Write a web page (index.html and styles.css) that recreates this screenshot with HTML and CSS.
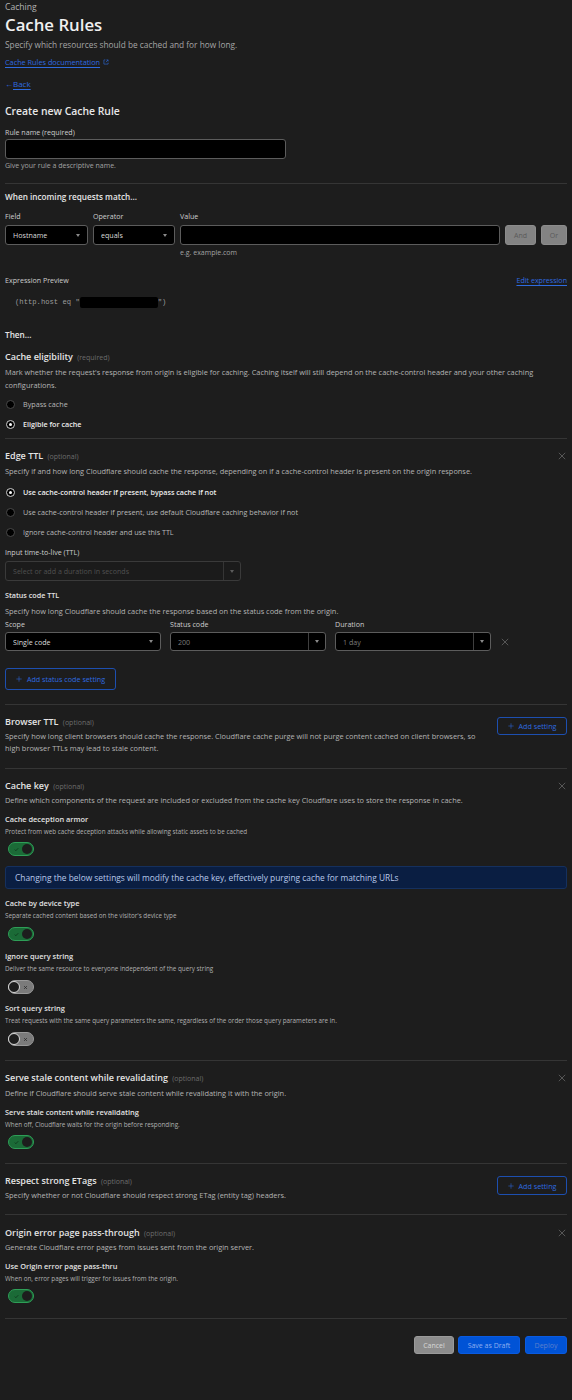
FILE: index.html
```html
<!DOCTYPE html>
<html lang="en">
<head>
<meta charset="utf-8">
<title>Cache Rules</title>
<link rel="stylesheet" href="styles.css">
</head>
<body>
<main class="page">
  <header class="page-header">
    <div class="crumb">Caching</div>
    <h1 class="title">Cache Rules</h1>
    <p class="subtitle">Specify which resources should be cached and for how long.</p>
    <div class="doc-row">
      <a class="link" href="#">Cache Rules documentation</a>
      <svg class="ext-icon" viewBox="0 0 8 8" width="6" height="6"><path d="M3.2 1.2H1.2v5.6h5.6V4.8" fill="none" stroke="currentColor" stroke-width="0.8"/><path d="M4.6 1.2h2.2v2.2M6.8 1.2L3.8 4.2" fill="none" stroke="currentColor" stroke-width="0.8"/></svg>
    </div>
    <div class="back-row"><span class="back-arrow">&larr;</span><a class="link" href="#">Back</a></div>
  </header>

  <section class="form-intro">
    <h2 class="form-title">Create new Cache Rule</h2>
    <label class="field-label rule-label">Rule name (required)</label>
    <div class="text-input rule-input"></div>
    <p class="hint">Give your rule a descriptive name.</p>
  </section>

  <section class="match">
    <h3 class="section-heading">When incoming requests match...</h3>
    <div class="match-grid">
      <span class="field-label">Field</span>
      <span class="field-label">Operator</span>
      <span class="field-label">Value</span>
      <span></span><span></span>
      <div class="select"><span class="select-value">Hostname</span><span class="caret"></span></div>
      <div class="select"><span class="select-value">equals</span><span class="caret"></span></div>
      <div class="text-input"></div>
      <button class="btn-gray" type="button">And</button>
      <button class="btn-gray" type="button">Or</button>
      <span></span><span></span>
      <span class="hint example">e.g. example.com</span>
    </div>
    <div class="expr-head"><span class="field-label">Expression Preview</span><a class="link" href="#">Edit expression</a></div>
    <div class="expr-code">(http.host eq "<span class="redacted"></span>")</div>
    <h3 class="section-heading then">Then...</h3>
  </section>

  <section class="setting eligibility">
    <h4 class="setting-title">Cache eligibility <span class="tag">(required)</span></h4>
    <p class="setting-desc multi">Mark whether the request's response from origin is eligible for caching. Caching itself will still depend on the cache-control header and your other caching configurations.</p>
    <div class="radio-list">
      <div class="radio"><span class="radio-dot"></span>Bypass cache</div>
      <div class="radio checked"><span class="radio-dot"></span>Eligible for cache</div>
    </div>
  </section>

  <section class="setting edge-ttl">
    <div class="setting-head">
      <h4 class="setting-title">Edge TTL <span class="tag">(optional)</span></h4>
      <svg class="close-icon" viewBox="0 0 10 10" width="8" height="8"><path d="M1 1L9 9M9 1L1 9" stroke="currentColor" stroke-width="0.9"/></svg>
    </div>
    <p class="setting-desc">Specify if and how long Cloudflare should cache the response, depending on if a cache-control header is present on the origin response.</p>
    <div class="radio-list edge-radios">
      <div class="radio checked"><span class="radio-dot"></span>Use cache-control header if present, bypass cache if not</div>
      <div class="radio"><span class="radio-dot"></span>Use cache-control header if present, use default Cloudflare caching behavior if not</div>
      <div class="radio"><span class="radio-dot"></span>Ignore cache-control header and use this TTL</div>
    </div>
    <div class="field-label ttl-label">Input time-to-live (TTL)</div>
    <div class="select split disabled ttl-select"><span class="select-value">Select or add a duration in seconds</span><span class="select-sep"></span><span class="caret"></span></div>
    <h5 class="sub-title status-title">Status code TTL</h5>
    <p class="setting-desc status-desc">Specify how long Cloudflare should cache the response based on the status code from the origin.</p>
    <div class="status-grid">
      <span class="field-label">Scope</span>
      <span class="field-label">Status code</span>
      <span class="field-label">Duration</span>
      <span></span>
      <div class="select"><span class="select-value">Single code</span><span class="caret"></span></div>
      <div class="select split"><span class="select-value dim">200</span><span class="select-sep"></span><span class="caret"></span></div>
      <div class="select split"><span class="select-value dim">1 day</span><span class="select-sep"></span><span class="caret"></span></div>
      <svg class="close-icon row-close" viewBox="0 0 10 10" width="8" height="8"><path d="M1 1L9 9M9 1L1 9" stroke="currentColor" stroke-width="0.9"/></svg>
    </div>
    <button class="btn-outline add-status" type="button"><svg class="plus" viewBox="0 0 10 10" width="6" height="6"><path d="M5 0.5v9M0.5 5h9" stroke="currentColor" stroke-width="0.9"/></svg>Add status code setting</button>
  </section>

  <section class="setting browser-ttl">
    <div class="setting-row">
      <div class="setting-main">
        <h4 class="setting-title">Browser TTL <span class="tag">(optional)</span></h4>
        <p class="setting-desc">Specify how long client browsers should cache the response. Cloudflare cache purge will not purge content cached on client browsers, so high browser TTLs may lead to stale content.</p>
      </div>
      <button class="btn-outline add-setting" type="button"><svg class="plus" viewBox="0 0 10 10" width="6" height="6"><path d="M5 0.5v9M0.5 5h9" stroke="currentColor" stroke-width="0.9"/></svg>Add setting</button>
    </div>
  </section>

  <section class="setting cache-key">
    <div class="setting-head">
      <h4 class="setting-title">Cache key <span class="tag">(optional)</span></h4>
      <svg class="close-icon" viewBox="0 0 10 10" width="8" height="8"><path d="M1 1L9 9M9 1L1 9" stroke="currentColor" stroke-width="0.9"/></svg>
    </div>
    <p class="setting-desc">Define which components of the request are included or excluded from the cache key Cloudflare uses to store the response in cache.</p>

    <div class="toggle-item first">
      <h5 class="sub-title">Cache deception armor</h5>
      <p class="small-desc">Protect from web cache deception attacks while allowing static assets to be cached</p>
      <div class="toggle on"><svg class="tick" viewBox="0 0 10 10" width="5" height="5"><path d="M1.5 5.2l2.2 2.2 4.8-5" fill="none" stroke="currentColor" stroke-width="1.3"/></svg><span class="knob"></span></div>
    </div>

    <div class="banner">Changing the below settings will modify the cache key, effectively purging cache for matching URLs</div>

    <div class="toggle-item after-banner">
      <h5 class="sub-title">Cache by device type</h5>
      <p class="small-desc">Separate cached content based on the visitor's device type</p>
      <div class="toggle on"><svg class="tick" viewBox="0 0 10 10" width="5" height="5"><path d="M1.5 5.2l2.2 2.2 4.8-5" fill="none" stroke="currentColor" stroke-width="1.3"/></svg><span class="knob"></span></div>
    </div>

    <div class="toggle-item">
      <h5 class="sub-title">Ignore query string</h5>
      <p class="small-desc">Deliver the same resource to everyone independent of the query string</p>
      <div class="toggle off"><span class="knob"></span><svg class="cross" viewBox="0 0 10 10" width="5" height="5"><path d="M2 2l6 6M8 2L2 8" stroke="currentColor" stroke-width="1.3"/></svg></div>
    </div>

    <div class="toggle-item last">
      <h5 class="sub-title">Sort query string</h5>
      <p class="small-desc">Treat requests with the same query parameters the same, regardless of the order those query parameters are in.</p>
      <div class="toggle off"><span class="knob"></span><svg class="cross" viewBox="0 0 10 10" width="5" height="5"><path d="M2 2l6 6M8 2L2 8" stroke="currentColor" stroke-width="1.3"/></svg></div>
    </div>
  </section>

  <section class="setting serve-stale">
    <div class="setting-head">
      <h4 class="setting-title">Serve stale content while revalidating <span class="tag">(optional)</span></h4>
      <svg class="close-icon" viewBox="0 0 10 10" width="8" height="8"><path d="M1 1L9 9M9 1L1 9" stroke="currentColor" stroke-width="0.9"/></svg>
    </div>
    <p class="setting-desc">Define if Cloudflare should serve stale content while revalidating it with the origin.</p>
    <div class="toggle-item first">
      <h5 class="sub-title">Serve stale content while revalidating</h5>
      <p class="small-desc">When off, Cloudflare waits for the origin before responding.</p>
      <div class="toggle on"><svg class="tick" viewBox="0 0 10 10" width="5" height="5"><path d="M1.5 5.2l2.2 2.2 4.8-5" fill="none" stroke="currentColor" stroke-width="1.3"/></svg><span class="knob"></span></div>
    </div>
  </section>

  <section class="setting etags">
    <div class="setting-row">
      <div class="setting-main">
        <h4 class="setting-title">Respect strong ETags <span class="tag">(optional)</span></h4>
        <p class="setting-desc">Specify whether or not Cloudflare should respect strong ETag (entity tag) headers.</p>
      </div>
      <button class="btn-outline add-setting" type="button"><svg class="plus" viewBox="0 0 10 10" width="6" height="6"><path d="M5 0.5v9M0.5 5h9" stroke="currentColor" stroke-width="0.9"/></svg>Add setting</button>
    </div>
  </section>

  <section class="setting origin-error">
    <div class="setting-head">
      <h4 class="setting-title">Origin error page pass-through <span class="tag">(optional)</span></h4>
      <svg class="close-icon" viewBox="0 0 10 10" width="8" height="8"><path d="M1 1L9 9M9 1L1 9" stroke="currentColor" stroke-width="0.9"/></svg>
    </div>
    <p class="setting-desc">Generate Cloudflare error pages from issues sent from the origin server.</p>
    <div class="toggle-item first">
      <h5 class="sub-title">Use Origin error page pass-thru</h5>
      <p class="small-desc">When on, error pages will trigger for issues from the origin.</p>
      <div class="toggle on"><svg class="tick" viewBox="0 0 10 10" width="5" height="5"><path d="M1.5 5.2l2.2 2.2 4.8-5" fill="none" stroke="currentColor" stroke-width="1.3"/></svg><span class="knob"></span></div>
    </div>
  </section>

  <footer class="actions">
    <button class="btn btn-cancel" type="button">Cancel</button>
    <button class="btn btn-primary" type="button">Save as Draft</button>
    <button class="btn btn-primary deploy" type="button">Deploy</button>
  </footer>
</main>
</body>
</html>
```

FILE: styles.css
```css
* { box-sizing: border-box; }
html, body { margin: 0; background: #1d1d1d; }
body {
  font-family: "Open Sans", "Noto Sans", sans-serif;
  font-size: 7.4px;
  line-height: 12px;
  color: #b8b8b8;
}
p, h1, h2, h3, h4, h5 { margin: 0; }
button { font-family: inherit; cursor: pointer; }

.page { padding: 0 5px 40px; }

/* Header */
.crumb { font-size: 8.6px; line-height: 14px; height: 14px; color: #b4b4b4; }
.title { font-size: 16.8px; line-height: 22px; height: 22px; font-weight: 600; color: #f0f0f0; }
.subtitle { margin-top: 3px; font-size: 8.3px; line-height: 12px; height: 12px; color: #a6a6a6; }
.link { color: #2e6be0; text-decoration: underline; text-underline-offset: 1.5px; }
.doc-row { margin-top: 5px; height: 12px; display: flex; align-items: center; gap: 3px; font-size: 7.3px; }
.ext-icon { color: #2e6be0; }
.back-row { margin-top: 10px; height: 12px; display: flex; align-items: center; font-size: 8px; color: #2e6be0; }
.back-arrow { font-size: 8px; }

/* Form intro */
.form-title { margin-top: 13px; font-size: 10.4px; line-height: 16px; height: 16px; font-weight: 600; color: #e8e8e8; }
.field-label { font-size: 7.1px; line-height: 10px; color: #cdcdcd; }
.rule-label { display: block; margin-top: 8px; height: 10px; }
.text-input { height: 20px; background: #000; border: 1px solid #5c5c5c; border-radius: 3px; }
.rule-input { margin-top: 2px; width: 281px; }
.hint { margin-top: 2px; font-size: 7px; line-height: 10px; height: 10px; color: #a3a3a3; }

/* Match */
.match { margin-top: 12px; border-top: 1px solid #353535; padding-top: 7px; }
.section-heading { font-size: 8.2px; line-height: 12px; height: 12px; font-weight: 600; color: #e6e6e6; }
.match-grid {
  margin-top: 8px;
  display: grid;
  grid-template-columns: 83px 82px 1fr 31px 26px;
  grid-template-rows: 14px 20px 13px;
  column-gap: 5px;
}
.match-grid .field-label { align-self: start; }
.example { margin: 0; padding-top: 3px; height: 13px; }

.select {
  height: 20px;
  background: #000;
  border: 1px solid #5c5c5c;
  border-radius: 3px;
  display: flex;
  align-items: center;
  padding: 0 7px 0 7px;
  font-size: 7.1px;
  color: #dcdcdc;
}
.select-value { flex: 1; white-space: nowrap; overflow: hidden; }
.select-value.dim { color: #7a7a7a; }
.caret {
  width: 0; height: 0;
  border-left: 2.5px solid transparent;
  border-right: 2.5px solid transparent;
  border-top: 3px solid #8a8a8a;
}
.select.split { padding-right: 6px; }
.select-sep { align-self: stretch; width: 1px; background: #3f3f3f; margin-right: 6px; }
.select.disabled { background: #1b1b1b; border-color: #3a3a3a; color: #505050; }
.select.disabled .select-sep { background: #353535; }
.select.disabled .caret { border-top-color: #5c5c5c; }

.btn-gray {
  height: 20px;
  border: 1px solid #8c8c8c;
  border-radius: 3px;
  background: #838383;
  color: #5a5a5a;
  font-size: 7px;
  padding: 0;
}

.expr-head {
  margin-top: 17px;
  display: flex;
  justify-content: space-between;
  align-items: center;
  height: 10px;
}
.expr-head .link { font-size: 7.1px; }
.expr-code {
  margin-top: 11px;
  height: 12px;
  padding-left: 10px;
  font-family: "Liberation Mono", "DejaVu Sans Mono", monospace;
  font-size: 7.2px;
  line-height: 12px;
  color: #9c9c9c;
  display: flex;
  align-items: center;
}
.redacted { display: inline-block; width: 78px; height: 11px; background: #000; border-radius: 2px; }
.then { margin-top: 21px; }

/* Settings */
.setting { border-top: 1px solid #353535; padding-top: 11px; }
.setting.eligibility { border-top: 0; padding-top: 0; margin-top: 10px; }
.setting-head { display: flex; justify-content: space-between; align-items: center; height: 12px; }
.setting-title { font-size: 9px; line-height: 12px; height: 12px; font-weight: 600; color: #e4e4e4; white-space: nowrap; }
.tag { font-weight: 400; font-size: 7px; line-height: 1; color: #6c6c6c; margin-left: 2px; }
.close-icon { color: #6c6c6c; margin-right: 1px; flex: none; }
.setting-desc { margin-top: 2px; font-size: 7.4px; line-height: 12px; color: #b4b4b4; }
.setting-desc.multi { margin-top: 3px; line-height: 13px; height: 26px; }

.radio-list { margin-top: 2px; }
.radio { height: 20px; display: flex; align-items: center; font-size: 7.2px; color: #b8b8b8; }
.radio-dot {
  width: 9px; height: 9px; border-radius: 50%;
  background: #000; border: 1px solid #4a4a4a;
  margin: 0 8px 0 1px;
  display: flex; align-items: center; justify-content: center;
  flex: none;
}
.radio.checked { color: #ececec; font-weight: 600; }
.radio.checked .radio-dot { border-color: #d0d0d0; }
.radio.checked .radio-dot::after { content: ""; width: 3px; height: 3px; border-radius: 50%; background: #fff; }

.edge-ttl { margin-top: 4px; }
.edge-ttl .setting-desc { margin-top: 3px; height: 12px; }
.edge-radios { margin-top: 5px; }
.ttl-label { margin-top: 5px; height: 10px; }
.ttl-select { margin-top: 4px; width: 236px; }
.sub-title { font-size: 7.4px; line-height: 12px; height: 12px; font-weight: 600; color: #e2e2e2; }
.status-title { margin-top: 9px; line-height: 10px; height: 10px; font-size: 7.2px; }
.edge-ttl .status-desc { margin-top: 5px; }
.status-grid {
  margin-top: 2px;
  display: grid;
  grid-template-columns: 156px 156px 156px 14px;
  grid-template-rows: 13px 19px;
  column-gap: 9px;
  align-items: start;
}
.status-grid .select { height: 19px; }
.row-close { align-self: center; margin-left: 1px; }

.btn-outline {
  display: inline-flex;
  align-items: center;
  justify-content: center;
  gap: 5px;
  background: transparent;
  border: 1px solid #1d4fb0;
  border-radius: 3px;
  color: #2e6be0;
  font-size: 7.2px;
  padding: 0;
}
.add-status { display: flex; margin-top: 17px; width: 111px; height: 22px; }

.browser-ttl { margin-top: 14px; }
.setting-row { display: flex; justify-content: space-between; align-items: flex-start; }
.setting-main { width: 480px; }
.add-setting { width: 70px; height: 18px; margin-top: 1px; flex: none; }

.cache-key { margin-top: 14px; }
.small-desc { margin-top: 2px; font-size: 6.3px; line-height: 10px; height: 10px; color: #b0b0b0; white-space: nowrap; }
.toggle-item { margin-top: 9px; }
.toggle-item.first { margin-top: 7px; }
.toggle-item.after-banner, .toggle-item.last { margin-top: 8px; }
.toggle-item .toggle { margin-top: 6px; }
.toggle-item.first .toggle { margin-top: 5px; }

.toggle {
  width: 26px; height: 14px;
  margin-left: 3px;
  border-radius: 7px;
  display: flex;
  align-items: center;
  justify-content: space-between;
}
.toggle.on { background: #1b6b37; border: 1px solid #2e9e57; padding: 0 1px 0 5px; }
.toggle.on .tick { color: #0d2a16; }
.toggle.on .knob { width: 10px; height: 10px; border-radius: 50%; background: #1d1d1d; }
.toggle.off { background: #7b7b7b; border: 1px solid #9a9a9a; padding: 0 5px 0 0; }
.toggle.off .knob { width: 12px; height: 12px; border-radius: 50%; background: #1d1d1d; border: 1px solid #d8d8d8; margin-left: -1px; }
.toggle.off .cross { color: #222; }

.banner {
  margin-top: 10px;
  height: 23px;
  display: flex;
  align-items: center;
  padding: 0 9px;
  background: #0a1e42;
  border: 1px solid #15305e;
  border-radius: 3px;
  font-size: 8.4px;
  color: #b9c9ea;
}

.serve-stale { margin-top: 14px; }
.serve-stale .setting-desc { margin-top: 3px; height: 12px; }
.etags { margin-top: 14px; }
.etags .add-setting { height: 19px; }
.origin-error { margin-top: 13px; padding-top: 12px; }

.actions {
  margin-top: 15px;
  border-top: 1px solid #353535;
  padding-top: 17px;
  display: flex;
  justify-content: flex-end;
  gap: 4px;
}
.btn { height: 18px; border-radius: 3px; font-size: 7px; padding: 0; border: 1px solid transparent; }
.btn-cancel { width: 40px; background: #8c8c8c; border-color: #9a9a9a; color: #d8d8d8; }
.btn-primary { background: #0053d6; border-color: #0a5be0; color: #8eaef0; width: 62px; }
.btn-primary.deploy { width: 42px; color: #5c7fcc; margin-left: 1px; }
```
